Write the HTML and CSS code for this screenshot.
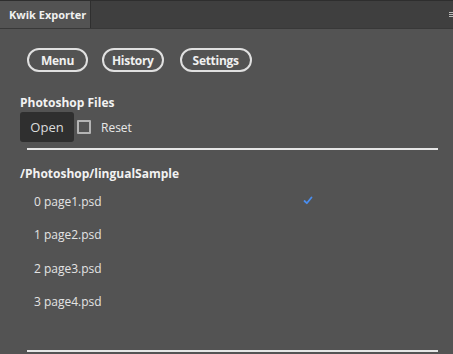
FILE: index.html
```html
<html>
  <head>
    <title>Kwik Exporter</title>
    <link rel="stylesheet" href="styles.css">
  </head>
  <body>
    <div class="tabbar">
      <div class="tab">Kwik Exporter</div>
      <div class="tab-menu"><span></span><span></span><span></span></div>
    </div>

    <div class="panel">
      <div class="nav">
        <button class="pill">Menu</button>
        <button class="pill">History</button>
        <button class="pill">Settings</button>
      </div>

      <h4 class="heading">Photoshop Files</h4>
      <div class="actions">
        <button class="open">Open</button>
        <label class="check"><span class="box"></span>Reset</label>
      </div>

      <hr class="rule" />

      <h4 class="heading path">/Photoshop/lingualSample</h4>
      <ul class="files">
        <li>
          <span class="name">0 page1.psd</span>
          <svg class="tick" width="10" height="9" viewBox="0 0 10 9">
            <path d="M1.5 5 L3.8 7.2 L8.5 1.5" fill="none" stroke="#4a8ef0" stroke-width="1.8" stroke-linecap="round" stroke-linejoin="round" />
          </svg>
        </li>
        <li><span class="name">1 page2.psd</span></li>
        <li><span class="name">2 page3.psd</span></li>
        <li><span class="name">3 page4.psd</span></li>
      </ul>

      <hr class="rule last" />
    </div>
  </body>
</html>
```

FILE: styles.css
```css
body {
  margin: 0;
  background-color: #535353;
  font-family: "Open Sans", "Noto Sans", sans-serif;
  color: #e8e8e8;
  overflow: hidden;
}

.tabbar {
  display: flex;
  height: 27px;
  background-color: #3f3f3f;
  border-top: 1px solid #2e2e2e;
  border-bottom: 1px solid #383838;
}
.tab {
  width: 91px;
  background-color: #535353;
  border-right: 1px solid #2f2f2f;
  font-size: 11px;
  font-weight: bold;
  color: #f0f0f0;
  padding: 6px 0 0 9px;
  box-sizing: border-box;
}
.tab-menu {
  margin-left: auto;
  display: flex;
  flex-direction: column;
  gap: 1px;
  padding-top: 11px;
}
.tab-menu span {
  display: block;
  width: 4px;
  height: 1px;
  background-color: #bbb;
}

.panel {
  padding: 0 15px 0 20px;
}

.nav {
  display: flex;
  gap: 14px;
  padding: 19px 0 0 7px;
}
.pill {
  height: 24px;
  padding: 0 8px;
  border: 2px solid #e0e0e0;
  border-radius: 12px;
  background: transparent;
  color: #f0f0f0;
  font-family: inherit;
  font-size: 12px;
  font-weight: bold;
  letter-spacing: -0.3px;
}
.pill:first-child {
  padding: 0 12px;
}
.pill:last-child {
  margin-left: 2px;
  padding: 0 11px;
}

.heading {
  margin: 22px 0 0 0;
  font-size: 12px;
  font-weight: bold;
  color: #f2f2f2;
}

.actions {
  display: flex;
  align-items: center;
  margin-top: 1px;
}
.open {
  width: 54px;
  height: 30px;
  border: none;
  border-radius: 3px;
  background-color: #2f2f2f;
  color: #dcdcdc;
  font-family: inherit;
  font-size: 13px;
}
.check {
  display: flex;
  align-items: center;
  font-size: 12px;
  color: #e8e8e8;
}
.box {
  width: 10px;
  height: 10px;
  border: 2px solid #b4b4b4;
  border-radius: 1px;
  margin: 0 10px 0 3px;
}

.rule {
  margin: 6px 0 0 7px;
  border: none;
  height: 2px;
  background-color: #e6e6e6;
}

.path {
  margin-top: 15px;
}

.files {
  list-style: none;
  margin: 0;
  padding: 0 0 0 14px;
}
.files li {
  display: flex;
  height: 33.3px;
  align-items: center;
  font-size: 12px;
  color: #e4e4e4;
}
.files li:first-child {
  margin-top: 3px;
}
.name {
  width: 269px;
}
.tick {
  margin-top: -2px;
}
.rule.last {
  margin-top: 32px;
}
```
